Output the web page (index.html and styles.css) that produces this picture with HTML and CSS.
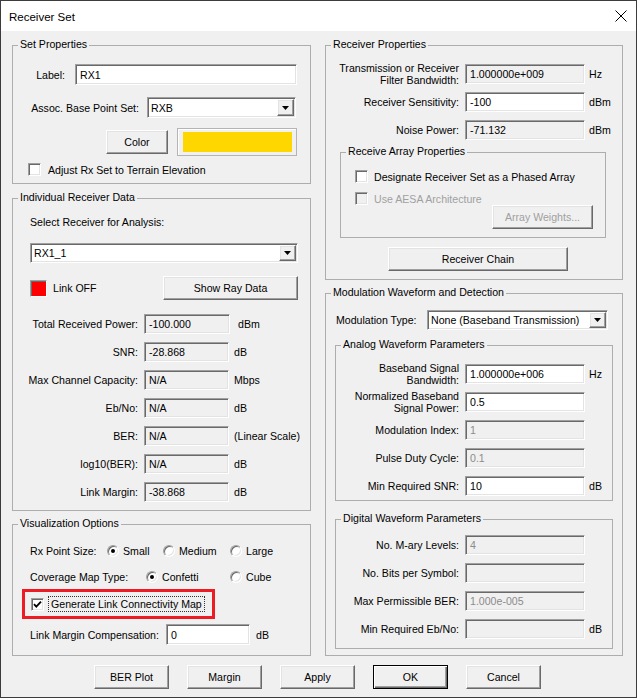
FILE: index.html
```html
<!DOCTYPE html>
<html lang="en">
<head>
    <meta charset="UTF-8">
    <title>Receiver Set</title>
    <link rel="stylesheet" href="styles.css">
</head>
<body>
    <div class="window">
        <div class="titlebar">
            <span class="title">Receiver Set</span>
            <svg class="close" width="12" height="12" viewBox="0 0 12 12">
                <path d="M0.5 0.5 L11.5 11.5 M11.5 0.5 L0.5 11.5" stroke="#000" stroke-width="1" fill="none"/>
            </svg>
        </div>

        <div class="content">
            <!-- left column -->
            <div class="col col-left">
                <div class="group g-set">
                    <span class="group-title">Set Properties</span>
                    <div class="row set-row1">
                        <span class="lbl lbl-label">Label:</span>
                        <div class="field edit f-label">RX1</div>
                    </div>
                    <div class="row set-row2">
                        <span class="lbl lbl-assoc">Assoc. Base Point Set:</span>
                        <div class="combo c-assoc">
                            <span class="combo-text">RXB</span>
                            <span class="combo-btn"><svg width="7" height="4" viewBox="0 0 7 4"><path d="M0 0 H7 L3.5 4 Z"/></svg></span>
                        </div>
                    </div>
                    <div class="row set-row3">
                        <div class="btn b-color">Color</div>
                        <div class="swatch"><div class="swatch-fill"></div></div>
                    </div>
                    <div class="row set-row4">
                        <span class="check"></span>
                        <span class="check-label">Adjust Rx Set to Terrain Elevation</span>
                    </div>
                </div>

                <div class="group g-ind">
                    <span class="group-title">Individual Receiver Data</span>
                    <div class="ind-top">
                        <div class="ind-caption">Select Receiver for Analysis:</div>
                        <div class="combo c-rx">
                            <span class="combo-text">RX1_1</span>
                            <span class="combo-btn"><svg width="7" height="4" viewBox="0 0 7 4"><path d="M0 0 H7 L3.5 4 Z"/></svg></span>
                        </div>
                        <div class="row link-row">
                            <span class="led"></span>
                            <span class="led-label">Link OFF</span>
                            <div class="btn b-ray">Show Ray Data</div>
                        </div>
                    </div>
                    <div class="drows">
                        <div class="drow"><span class="dlbl">Total Received Power:</span><div class="field dfield wide">-100.000</div><span class="unit u-wide">dBm</span></div>
                        <div class="drow"><span class="dlbl">SNR:</span><div class="field dfield">-28.868</div><span class="unit">dB</span></div>
                        <div class="drow"><span class="dlbl">Max Channel Capacity:</span><div class="field dfield">N/A</div><span class="unit">Mbps</span></div>
                        <div class="drow"><span class="dlbl">Eb/No:</span><div class="field dfield">N/A</div><span class="unit">dB</span></div>
                        <div class="drow"><span class="dlbl">BER:</span><div class="field dfield">N/A</div><span class="unit">(Linear Scale)</span></div>
                        <div class="drow"><span class="dlbl">log10(BER):</span><div class="field dfield">N/A</div><span class="unit">dB</span></div>
                        <div class="drow"><span class="dlbl">Link Margin:</span><div class="field dfield">-38.868</div><span class="unit">dB</span></div>
                    </div>
                </div>

                <div class="group g-vis">
                    <span class="group-title">Visualization Options</span>
                    <div class="row vrow">
                        <span class="v-lbl1">Rx Point Size:</span>
                        <span class="opt o-small"><span class="radio on"></span>Small</span>
                        <span class="opt o-medium"><span class="radio"></span>Medium</span>
                        <span class="opt"><span class="radio"></span>Large</span>
                    </div>
                    <div class="row vrow vrow2">
                        <span class="v-lbl2">Coverage Map Type:</span>
                        <span class="opt o-confetti"><span class="radio on"></span>Confetti</span>
                        <span class="opt"><span class="radio"></span>Cube</span>
                    </div>
                    <div class="hl">
                        <span class="check">
                            <svg width="9" height="9" viewBox="0 0 9 9"><path d="M1 4.2 L3.3 6.6 L8 1.6" stroke="#000" stroke-width="1.8" fill="none"/></svg>
                        </span>
                        <span class="focus-label">Generate Link Connectivity Map</span>
                    </div>
                    <div class="row vrow4">
                        <span class="v-lbl3">Link Margin Compensation:</span>
                        <div class="field edit f-comp">0</div>
                        <span class="unit u-comp">dB</span>
                    </div>
                </div>
            </div>

            <!-- right column -->
            <div class="col col-right">
                <div class="group g-rprops">
                    <span class="group-title">Receiver Properties</span>
                    <div class="prow">
                        <span class="plbl">Transmission or Receiver<br>Filter Bandwidth:</span>
                        <div class="field pfield">1.000000e+009</div>
                        <span class="unit punit">Hz</span>
                    </div>
                    <div class="prow">
                        <span class="plbl">Receiver Sensitivity:</span>
                        <div class="field edit pfield">-100</div>
                        <span class="unit punit">dBm</span>
                    </div>
                    <div class="prow">
                        <span class="plbl">Noise Power:</span>
                        <div class="field pfield">-71.132</div>
                        <span class="unit punit">dBm</span>
                    </div>

                    <div class="group g-array">
                        <span class="group-title">Receive Array Properties</span>
                        <div class="row arow">
                            <span class="check"></span>
                            <span class="alabel">Designate Receiver Set as a Phased Array</span>
                        </div>
                        <div class="row arow arow2">
                            <span class="check disabled"></span>
                            <span class="alabel dim-text">Use AESA Architecture</span>
                        </div>
                        <div class="wrow">
                            <div class="btn disabled b-weights">Array Weights...</div>
                        </div>
                    </div>

                    <div class="btn b-chain">Receiver Chain</div>
                </div>

                <div class="group g-mod">
                    <span class="group-title">Modulation Waveform and Detection</span>
                    <div class="row mrow">
                        <span class="m-lbl">Modulation Type:</span>
                        <div class="combo c-mod">
                            <span class="combo-text">None (Baseband Transmission)</span>
                            <span class="combo-btn"><svg width="7" height="4" viewBox="0 0 7 4"><path d="M0 0 H7 L3.5 4 Z"/></svg></span>
                        </div>
                    </div>

                    <div class="group g-analog">
                        <span class="group-title">Analog Waveform Parameters</span>
                        <div class="prow">
                            <span class="slbl">Baseband Signal<br>Bandwidth:</span>
                            <div class="field edit pfield">1.000000e+006</div>
                            <span class="unit punit">Hz</span>
                        </div>
                        <div class="prow">
                            <span class="slbl">Normalized Baseband<br>Signal Power:</span>
                            <div class="field edit pfield">0.5</div>
                        </div>
                        <div class="prow">
                            <span class="slbl">Modulation Index:</span>
                            <div class="field dim pfield">1</div>
                        </div>
                        <div class="prow">
                            <span class="slbl">Pulse Duty Cycle:</span>
                            <div class="field dim pfield">0.1</div>
                        </div>
                        <div class="prow">
                            <span class="slbl">Min Required SNR:</span>
                            <div class="field edit pfield">10</div>
                            <span class="unit punit">dB</span>
                        </div>
                    </div>

                    <div class="group g-digital">
                        <span class="group-title">Digital Waveform Parameters</span>
                        <div class="prow">
                            <span class="slbl">No. M-ary Levels:</span>
                            <div class="field dim pfield">4</div>
                        </div>
                        <div class="prow">
                            <span class="slbl">No. Bits per Symbol:</span>
                            <div class="field dim pfield"></div>
                        </div>
                        <div class="prow">
                            <span class="slbl">Max Permissible BER:</span>
                            <div class="field dim pfield">1.000e-005</div>
                        </div>
                        <div class="prow">
                            <span class="slbl">Min Required Eb/No:</span>
                            <div class="field dim pfield"></div>
                            <span class="unit punit">dB</span>
                        </div>
                    </div>
                </div>
            </div>
        </div>

        <div class="buttons">
            <div class="btn">BER Plot</div>
            <div class="btn">Margin</div>
            <div class="btn">Apply</div>
            <div class="btn default">OK</div>
            <div class="btn">Cancel</div>
        </div>
    </div>
</body>
</html>
```

FILE: styles.css
```css
* {
    box-sizing: border-box;
}

body {
    margin: 0;
    font-family: "Liberation Sans", Arial, sans-serif;
    font-size: 10.6px;
    color: #000;
    background: #fff;
}

.window {
    width: 637px;
    height: 698px;
    border: 1px solid #3c3c3c;
    background: #f0f0f0;
    display: flex;
    flex-direction: column;
    white-space: nowrap;
}

.titlebar {
    height: 30px;
    flex: none;
    background: #fff;
    display: flex;
    align-items: center;
    padding: 0 9px 0 8px;
}

.title {
    flex: 1;
    font-size: 11.5px;
    padding-top: 1px;
}

.content {
    display: flex;
    align-items: flex-start;
    gap: 14px;
    padding: 14px 0 0 11px;
}

.col {
    display: flex;
    flex-direction: column;
}

.col-left { width: 299px; }
.col-right { width: 298px; }

/* group boxes */
.group {
    position: relative;
    border: 1px solid #adadad;
    flex: none;
}

.group-title {
    position: absolute;
    top: -8px;
    left: 5px;
    padding: 0 2px;
    line-height: 13px;
    background: #f0f0f0;
}

.row {
    display: flex;
    align-items: center;
}

.lbl {
    flex: none;
    text-align: right;
}

/* sunken text fields */
.field {
    flex: none;
    height: 20px;
    display: flex;
    align-items: center;
    padding: 0 4px;
    border: 1px solid;
    border-color: #a0a0a0 #fff #fff #a0a0a0;
    box-shadow: inset 1px 1px #696969, inset -1px -1px #e3e3e3;
    background: #f0f0f0;
    overflow: hidden;
}

.field.edit { background: #fff; }
.field.dim { color: #8c8c8c; }

.combo {
    flex: none;
    display: flex;
    align-items: stretch;
    padding: 1px;
    border: 1px solid;
    border-color: #a0a0a0 #fff #fff #a0a0a0;
    box-shadow: inset 1px 1px #696969, inset -1px -1px #e3e3e3;
    background: #fff;
}

.combo-text {
    flex: 1;
    display: flex;
    align-items: center;
    padding-left: 2px;
}

.combo-btn {
    width: 17px;
    display: flex;
    align-items: center;
    justify-content: center;
    background: #f0f0f0;
    border: 1px solid;
    border-color: #fff #696969 #696969 #fff;
    box-shadow: inset -1px -1px #a0a0a0, inset 1px 1px #e3e3e3;
}

/* raised buttons */
.btn {
    flex: none;
    height: 24px;
    display: flex;
    align-items: center;
    justify-content: center;
    background: #f0f0f0;
    border: 1px solid;
    border-color: #fff #696969 #696969 #fff;
    box-shadow: inset -1px -1px #a0a0a0, inset 1px 1px #e3e3e3;
}

.btn.default {
    border-color: #000;
    box-shadow: inset 1px 1px #fff, inset -1px -1px #696969, inset -2px -2px #a0a0a0;
}

.btn.disabled { color: #a0a0a0; }

.check {
    flex: none;
    width: 13px;
    height: 13px;
    display: flex;
    align-items: center;
    justify-content: center;
    background: #fff;
    border: 1px solid;
    border-color: #a0a0a0 #fff #fff #a0a0a0;
    box-shadow: inset 1px 1px #696969, inset -1px -1px #e3e3e3;
}

.check.disabled { background: #f0f0f0; }

.radio {
    flex: none;
    position: relative;
    width: 12px;
    height: 12px;
    border-radius: 50%;
    background: #fff;
    border: 1px solid;
    border-color: #a0a0a0 #fff #fff #a0a0a0;
    box-shadow: inset 1px 1px #696969, inset -1px -1px #e3e3e3;
}

.radio.on::after {
    content: "";
    position: absolute;
    left: 3px;
    top: 3px;
    width: 4px;
    height: 4px;
    border-radius: 50%;
    background: #000;
}

.unit { margin-left: 5px; }
.dim-text { color: #a0a0a0; }

/* Set Properties */
.g-set { height: 139px; padding-top: 18px; }
.set-row1 { height: 21px; }
.lbl-label { width: 52px; margin-right: 10px; }
.f-label { width: 222px; height: 21px; }
.set-row2 { height: 21px; margin-top: 12px; }
.lbl-assoc { width: 126px; margin-right: 8px; }
.c-assoc { width: 149px; height: 21px; }
.set-row3 { height: 28px; margin-top: 10px; }
.b-color { width: 62px; margin-left: 93px; }

.swatch {
    width: 120px;
    height: 28px;
    margin-left: 9px;
    padding: 3px 4px 3px 5px;
    border: 1px solid #b4b4b4;
    box-shadow: inset 1px 1px #fff;
}

.swatch-fill {
    height: 100%;
    background: #ffd700;
}

.set-row4 { height: 13px; margin-top: 7px; padding-left: 15px; }
.check-label { margin-left: 7px; }

/* Individual Receiver Data */
.g-ind { height: 313px; margin-top: 14px; }
.ind-top { padding: 17px 12px 0 17px; }
.ind-caption { line-height: 13px; }
.c-rx { height: 20px; margin-top: 14px; }
.link-row { height: 24px; margin-top: 13px; }

.led {
    flex: none;
    width: 17px;
    height: 17px;
    background: #f00;
    border: 1px solid;
    border-color: #a0a0a0 #fff #fff #a0a0a0;
    box-shadow: inset 1px 1px #696969;
}

.led-label { margin-left: 6px; }
.b-ray { width: 135px; margin-left: auto; }

.drows { margin-top: 14px; }

.drow {
    display: flex;
    align-items: center;
    height: 20px;
}

.drow + .drow { margin-top: 8px; }
.dlbl { width: 125px; text-align: right; }
.dfield { width: 85px; margin-left: 6px; }
.dfield.wide { width: 86px; }
.u-wide { margin-left: 8px; }

/* Visualization Options */
.g-vis { height: 132px; margin-top: 13px; padding: 19px 0 0 17px; }
.vrow { height: 14px; }
.vrow2 { margin-top: 12px; }

.opt {
    display: flex;
    align-items: center;
    gap: 4px;
}

.v-lbl1 { width: 77px; }
.o-small { width: 56px; }
.o-medium { width: 67px; }
.v-lbl2 { width: 116px; }
.o-confetti { width: 84px; }

.hl {
    display: flex;
    align-items: center;
    width: 193px;
    height: 30px;
    margin: 5px 0 0 -8px;
    padding-left: 6px;
    border: 3px solid #ed1c24;
}

.focus-label {
    margin-left: 4px;
    padding: 1px 2px;
    border: 1px dotted #333;
}

.vrow4 { height: 21px; margin-top: 5px; }
.v-lbl3 { flex: none; width: 128px; }
.f-comp { width: 84px; height: 21px; margin-left: 8px; }
.u-comp { margin-left: 6px; }

/* Receiver Properties */
.g-rprops { height: 235px; padding-top: 18px; }

.prow {
    display: flex;
    align-items: center;
    height: 20px;
}

.prow + .prow { margin-top: 8px; }

.plbl {
    width: 133px;
    text-align: right;
    line-height: 12px;
}

.pfield { width: 120px; margin-left: 6px; }
.punit { margin-left: 4px; }

.g-array { height: 86px; margin: 12px 16px 0 14px; padding: 17px 0 0 14px; }
.arow { height: 13px; }
.arow2 { margin-top: 9px; }
.alabel { margin-left: 6px; }
.wrow { display: flex; }
.b-weights { width: 101px; margin-left: auto; margin-right: 12px; }
.b-chain { width: 180px; margin: 9px 0 0 62px; }

/* Modulation */
.g-mod { height: 363px; margin-top: 13px; padding-top: 16px; }
.mrow { height: 20px; padding-left: 10px; }
.m-lbl { width: 91px; }
.c-mod { width: 181px; height: 20px; }

.g-analog { height: 156px; margin: 15px 9px 0 9px; padding-top: 18px; }
.g-digital { height: 130px; margin: 18px 9px 0 9px; padding-top: 15px; }

.slbl {
    width: 123px;
    text-align: right;
    line-height: 12px;
}

/* bottom buttons */
.buttons {
    display: flex;
    gap: 18px;
    padding-left: 93px;
    margin-top: 9px;
}

.buttons .btn { width: 75px; }
```
